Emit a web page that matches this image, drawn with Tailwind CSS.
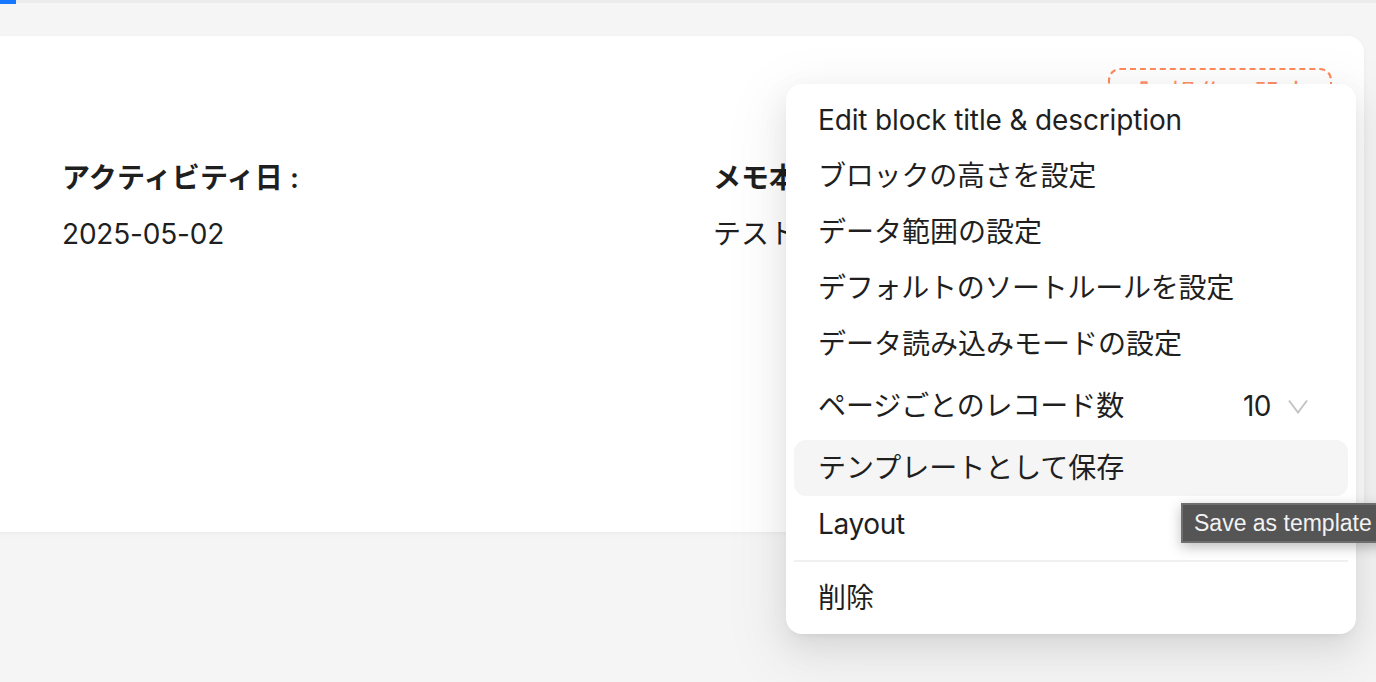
<!DOCTYPE html>
<html lang="ja">
<head>
<meta charset="utf-8">
<script src="https://cdn.jsdelivr.net/npm/@tailwindcss/browser@4"></script>
</head>
<body class="w-[1376px] h-[682px] overflow-hidden bg-[#f5f5f5] font-['Inter','Noto_Sans_CJK_JP',sans-serif] text-[28px] leading-[44px] text-[#1f1f1f]">
<div class="relative w-[1376px] h-[682px] overflow-hidden">
  <div class="relative h-[3px] bg-[#ececec]">
    <div class="absolute left-0 top-0 w-4 h-1 bg-[#1677ff]"></div>
  </div>
  <div class="mt-[33px] ml-[-16px] mr-3 h-[496px] bg-white rounded-2xl shadow-[0_1px_3px_rgba(0,0,0,0.03),0_2px_8px_rgba(0,0,0,0.025)] pt-8 pr-8 pl-[79px]">
    <div class="flex justify-end">
      <div class="flex items-start justify-center gap-3 pt-[3px] w-56 h-16 rounded-xl border-2 border-dashed border-[#ff8a5c] text-[#ff8f66]">
        <svg class="w-7 h-7 mt-1.5" viewBox="0 0 24 24" fill="none" stroke="currentColor" stroke-width="2"><circle cx="12" cy="12" r="3"/><path d="M19 12a7 7 0 0 0-.1-1.2l2-1.6-2-3.4-2.4 1a7 7 0 0 0-2-1.200L14 3h-4l-.5 2.600a7 7 0 0 0-2 1.200l-2.400-1-2 3.400 2 1.600a7 7 0 0 0 0 2.400l-2 1.600 2 3.400 2.400-1a7 7 0 0 0 2 1.200L10 21h4l.5-2.600a7 7 0 0 0 2-1.200l2.400 1 2-3.400-2-1.600c.1-.4.1-.8.1-1.200z"/></svg>
        <span>操作の設定</span>
      </div>
    </div>
    <div class="grid grid-cols-[651px_1fr] mt-[18px] -ml-px">
      <div>
        <div class="font-semibold h-14 flex items-center tracking-[0.2px]">アクティビティ日 :</div>
        <div class="h-14 flex items-center tracking-[-0.2px]">2025-05-02</div>
      </div>
      <div>
        <div class="font-semibold h-14 flex items-center">メモ本文 :</div>
        <div class="h-14 flex items-center">テストメモです</div>
      </div>
    </div>
  </div>

  <div class="absolute left-[786px] top-[84px] w-[570px] h-[550px] bg-white rounded-2xl p-2 shadow-[0_12px_32px_rgba(0,0,0,0.08),0_6px_12px_-8px_rgba(0,0,0,0.12),0_18px_56px_16px_rgba(0,0,0,0.05)]">
    <div class="h-14 px-6 flex items-center tracking-[-0.14px]">Edit block title &amp; description</div>
    <div class="h-14 px-6 flex items-center tracking-[-0.2px]">ブロックの高さを設定</div>
    <div class="h-14 px-6 flex items-center">データ範囲の設定</div>
    <div class="h-14 px-6 flex items-center tracking-[-0.27px]">デフォルトのソートルールを設定</div>
    <div class="h-14 px-6 flex items-center">データ読み込みモードの設定</div>
    <div class="h-[68px] px-6 flex items-center justify-between">
      <span class="tracking-[-0.1px]">ページごとのレコード数</span>
      <span class="flex items-center gap-[17px] pr-4">
        <span class="tracking-[-0.5px]">10</span>
        <svg class="w-5 h-[15px]" viewBox="0 0 20 15" fill="none" stroke="#c4c4c4" stroke-width="2"><path d="M1 1.500l9 12 9-12"/></svg>
      </span>
    </div>
    <div class="h-14 px-6 flex items-center bg-[#f5f5f5] rounded-xl">テンプレートとして保存</div>
    <div class="h-14 px-6 flex items-center tracking-[-0.33px]">Layout</div>
    <div class="h-0.5 bg-[#f0f0f0] my-2"></div>
    <div class="h-14 px-6 flex items-center">削除</div>
  </div>

  <div class="absolute left-[1181px] top-[503px] w-[220px] h-10 pl-[11px] flex items-center bg-[#555555] border-2 border-[#6f6f6f] text-[#f2f2f2] font-['Liberation_Sans',sans-serif] text-[23px] leading-none shadow-[0_4px_12px_rgba(0,0,0,0.25)] whitespace-nowrap">Save as template</div>
</div>
</body>
</html>
